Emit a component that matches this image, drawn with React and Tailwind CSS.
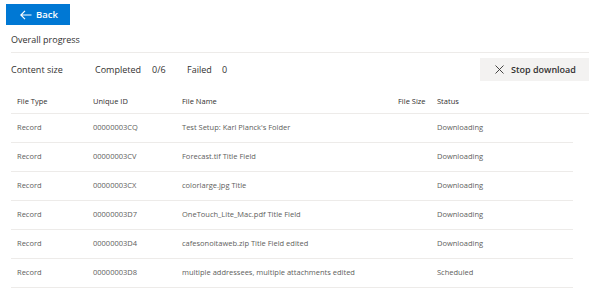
import React from "react";

const rows = [
  ["Record", "00000003CQ", "Test Setup: Karl Planck's Folder", "", "Downloading"],
  ["Record", "00000003CV", "Forecast.tif Title Field", "", "Downloading"],
  ["Record", "00000003CX", "colorlarge.jpg Title", "", "Downloading"],
  ["Record", "00000003D7", "OneTouch_Lite_Mac.pdf Title Field", "", "Downloading"],
  ["Record", "00000003D4", "cafesonoitaweb.zip Title Field edited", "", "Downloading"],
  ["Record", "00000003D8", "multiple addressees, multiple attachments edited", "", "Scheduled"],
];

export default function App() {
  return (
    <div
      className="w-[600px] h-[301px] bg-white overflow-hidden text-[9px] text-[#323130]"
      style={{ fontFamily: '"Open Sans", "Noto Sans", sans-serif' }}
    >
      <div className="pt-[4px] pl-[6px]">
        <button className="w-[64px] h-[21px] bg-[#0078d4] text-white flex items-center pl-[14px] gap-[4px]">
          <svg width="12" height="10" viewBox="0 0 12 10" fill="none" stroke="white" strokeWidth="1.2">
            <path d="M11.5 5H1M5 0.8L0.8 5L5 9.2" />
          </svg>
          <span className="font-semibold text-[9.5px] leading-none">Back</span>
        </button>
      </div>
      <div className="px-[11px]">
        <div className="mt-[3px] h-[25px] flex items-center border-b border-[#edebe9]">
          <span>Overall progress</span>
        </div>
        <div className="mt-[5px] h-[23px] flex items-center justify-between">
          <div className="flex items-center">
            <span className="w-[84px]">Content size</span>
            <span className="w-[57px]">Completed</span>
            <span className="w-[35px]">0/6</span>
            <span className="w-[35px]">Failed</span>
            <span>0</span>
          </div>
          <button className="w-[109px] h-[23px] bg-[#f3f2f1] flex items-center pl-[15px] gap-[7px]">
            <svg width="9" height="9" viewBox="0 0 9 9" fill="none" stroke="#323130" strokeWidth="0.9">
              <path d="M0.5 0.5L8.5 8.5M8.5 0.5L0.5 8.5" />
            </svg>
            <span className="font-semibold text-[9px]">Stop download</span>
          </button>
        </div>
        <div className="mt-[9px] h-[24px] flex items-center border-b border-[#edebe9] pl-[6px] text-[7.5px]">
          <span className="w-[76px]">File Type</span>
          <span className="w-[89px]">Unique ID</span>
          <span className="w-[216px]">File Name</span>
          <span className="w-[39px]">File Size</span>
          <span>Status</span>
        </div>
        <div className="w-[562px] text-[#605e5c] text-[7.5px]">
          {rows.map((r, i) => (
            <div key={i} className="h-[29px] flex items-center border-b border-[#edebe9] pl-[6px]">
              <span className="w-[76px]">{r[0]}</span>
              <span className="w-[89px]">{r[1]}</span>
              <span className="w-[216px]">{r[2]}</span>
              <span className="w-[39px]">{r[3]}</span>
              <span>{r[4]}</span>
            </div>
          ))}
        </div>
      </div>
    </div>
  );
}
